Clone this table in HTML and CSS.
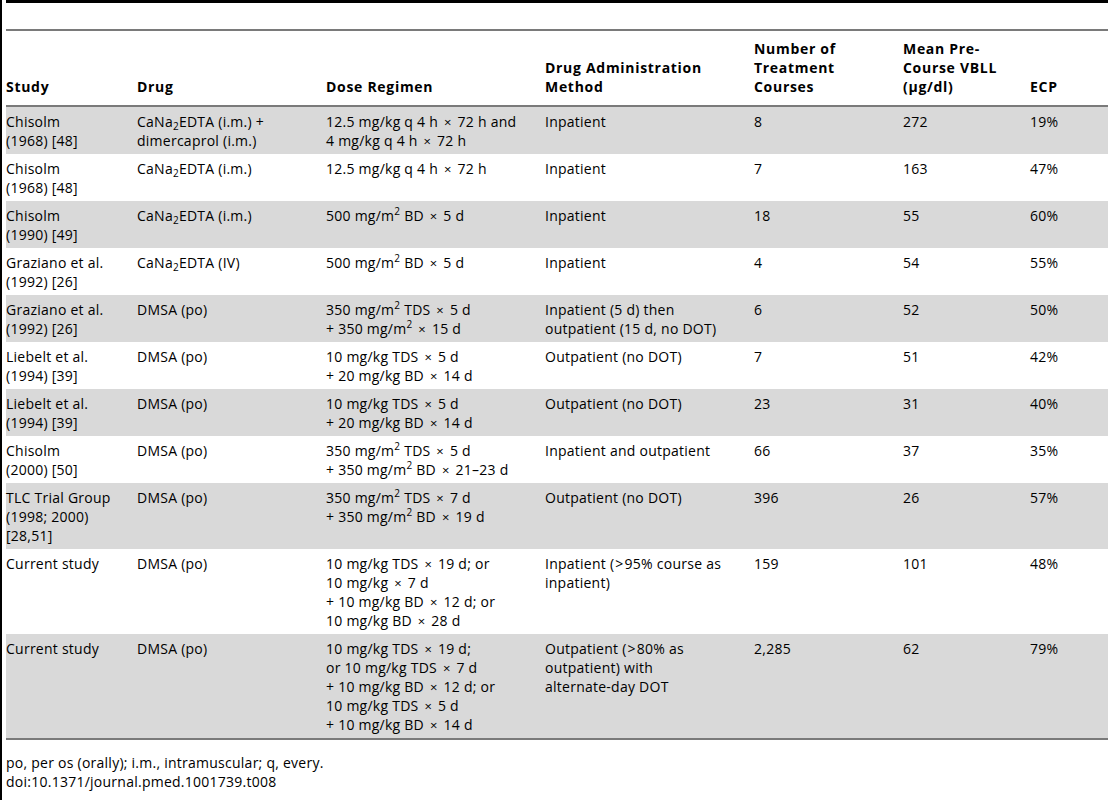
FILE: index.html
```html
<!DOCTYPE html>
<html lang="en">

<head>
    <meta charset="UTF-8">
    <meta name="viewport" content="width=device-width, initial-scale=1.0">
    <title>Table 8</title>
    <link rel="stylesheet" href="styles.css">
</head>

<body>

    <div class="page">
        <div class="caption"></div>

        <table class="data">
            <colgroup>
                <col class="c-study">
                <col class="c-drug">
                <col class="c-dose">
                <col class="c-method">
                <col class="c-courses">
                <col class="c-vbll">
                <col class="c-ecp">
            </colgroup>
            <thead>
                <tr>
                    <th>Study</th>
                    <th>Drug</th>
                    <th>Dose Regimen</th>
                    <th>Drug Administration<br>Method</th>
                    <th>Number of<br>Treatment<br>Courses</th>
                    <th>Mean Pre-<br>Course VBLL<br>(&mu;g/dl)</th>
                    <th>ECP</th>
                </tr>
            </thead>
            <tbody>
                <tr>
                    <td>Chisolm<br>(1968) [48]</td>
                    <td>CaNa<sub>2</sub>EDTA (i.m.) +<br>dimercaprol (i.m.)</td>
                    <td>12.5 mg/kg q 4 h <span class="x">&times;</span> 72 h and<br>4 mg/kg q 4 h <span class="x">&times;</span> 72 h</td>
                    <td>Inpatient</td>
                    <td>8</td>
                    <td>272</td>
                    <td>19%</td>
                </tr>
                <tr>
                    <td>Chisolm<br>(1968) [48]</td>
                    <td>CaNa<sub>2</sub>EDTA (i.m.)</td>
                    <td>12.5 mg/kg q 4 h <span class="x">&times;</span> 72 h</td>
                    <td>Inpatient</td>
                    <td>7</td>
                    <td>163</td>
                    <td>47%</td>
                </tr>
                <tr>
                    <td>Chisolm<br>(1990) [49]</td>
                    <td>CaNa<sub>2</sub>EDTA (i.m.)</td>
                    <td>500 mg/m<sup>2</sup> BD <span class="x">&times;</span> 5 d</td>
                    <td>Inpatient</td>
                    <td>18</td>
                    <td>55</td>
                    <td>60%</td>
                </tr>
                <tr>
                    <td>Graziano et al.<br>(1992) [26]</td>
                    <td>CaNa<sub>2</sub>EDTA (IV)</td>
                    <td>500 mg/m<sup>2</sup> BD <span class="x">&times;</span> 5 d</td>
                    <td>Inpatient</td>
                    <td>4</td>
                    <td>54</td>
                    <td>55%</td>
                </tr>
                <tr>
                    <td>Graziano et al.<br>(1992) [26]</td>
                    <td>DMSA (po)</td>
                    <td>350 mg/m<sup>2</sup> TDS <span class="x">&times;</span> 5 d<br>+ 350 mg/m<sup>2</sup> <span class="x">&times;</span> 15 d</td>
                    <td>Inpatient (5 d) then<br>outpatient (15 d, no DOT)</td>
                    <td>6</td>
                    <td>52</td>
                    <td>50%</td>
                </tr>
                <tr>
                    <td>Liebelt et al.<br>(1994) [39]</td>
                    <td>DMSA (po)</td>
                    <td>10 mg/kg TDS <span class="x">&times;</span> 5 d<br>+ 20 mg/kg BD <span class="x">&times;</span> 14 d</td>
                    <td>Outpatient (no DOT)</td>
                    <td>7</td>
                    <td>51</td>
                    <td>42%</td>
                </tr>
                <tr>
                    <td>Liebelt et al.<br>(1994) [39]</td>
                    <td>DMSA (po)</td>
                    <td>10 mg/kg TDS <span class="x">&times;</span> 5 d<br>+ 20 mg/kg BD <span class="x">&times;</span> 14 d</td>
                    <td>Outpatient (no DOT)</td>
                    <td>23</td>
                    <td>31</td>
                    <td>40%</td>
                </tr>
                <tr>
                    <td>Chisolm<br>(2000) [50]</td>
                    <td>DMSA (po)</td>
                    <td>350 mg/m<sup>2</sup> TDS <span class="x">&times;</span> 5 d<br>+ 350 mg/m<sup>2</sup> BD <span class="x">&times;</span> 21&ndash;23 d</td>
                    <td>Inpatient and outpatient</td>
                    <td>66</td>
                    <td>37</td>
                    <td>35%</td>
                </tr>
                <tr>
                    <td>TLC Trial Group<br>(1998; 2000)<br>[28,51]</td>
                    <td>DMSA (po)</td>
                    <td>350 mg/m<sup>2</sup> TDS <span class="x">&times;</span> 7 d<br>+ 350 mg/m<sup>2</sup> BD <span class="x">&times;</span> 19 d</td>
                    <td>Outpatient (no DOT)</td>
                    <td>396</td>
                    <td>26</td>
                    <td>57%</td>
                </tr>
                <tr>
                    <td>Current study</td>
                    <td>DMSA (po)</td>
                    <td>10 mg/kg TDS <span class="x">&times;</span> 19 d; or<br>10 mg/kg <span class="x">&times;</span> 7 d<br>+ 10 mg/kg BD <span class="x">&times;</span> 12 d; or<br>10 mg/kg BD <span class="x">&times;</span> 28 d</td>
                    <td>Inpatient (<span class="gt">&gt;</span>95% course as<br>inpatient)</td>
                    <td>159</td>
                    <td>101</td>
                    <td>48%</td>
                </tr>
                <tr>
                    <td>Current study</td>
                    <td>DMSA (po)</td>
                    <td>10 mg/kg TDS <span class="x">&times;</span> 19 d;<br>or 10 mg/kg TDS <span class="x">&times;</span> 7 d<br>+ 10 mg/kg BD <span class="x">&times;</span> 12 d; or<br>10 mg/kg TDS <span class="x">&times;</span> 5 d<br>+ 10 mg/kg BD <span class="x">&times;</span> 14 d</td>
                    <td>Outpatient (<span class="gt">&gt;</span>80% as<br>outpatient) with<br>alternate-day DOT</td>
                    <td>2,285</td>
                    <td>62</td>
                    <td>79%</td>
                </tr>
            </tbody>
        </table>

        <div class="notes">
            <p>po, per os (orally); i.m., intramuscular; q, every.</p>
            <p>doi:10.1371/journal.pmed.1001739.t008</p>
        </div>
    </div>

</body>

</html>
```

FILE: styles.css
```css
body {
    margin: 0;
    background: #ffffff;
    color: #000000;
    font-family: "Open Sans", "DejaVu Sans", sans-serif;
    font-size: 14px;
    line-height: 19px;
    letter-spacing: 0.25px;
}

.page {
    min-height: 100vh;
    box-sizing: border-box;
    border-left: 2px solid #000000;
    padding-left: 4px;
}

.caption {
    height: 26px;
    border-top: 3px solid #000000;
}

.data {
    width: 1102px;
    table-layout: fixed;
    border-collapse: collapse;
    border-top: 2px solid #7a7a7a;
    border-bottom: 2px solid #7a7a7a;
}

.c-study { width: 131px; }
.c-drug { width: 189px; }
.c-dose { width: 219px; }
.c-method { width: 209px; }
.c-courses { width: 149px; }
.c-vbll { width: 127px; }
.c-ecp { width: 78px; }

.data th {
    height: 57px;
    padding: 8px 4px 9px 0;
    text-align: left;
    vertical-align: bottom;
    font-weight: bold;
    letter-spacing: 0.7px;
    border-bottom: 2px solid #7a7a7a;
    white-space: nowrap;
}

.data td {
    padding: 5px 4px 4px 0;
    text-align: left;
    vertical-align: top;
    white-space: nowrap;
}

.data tbody tr:nth-child(odd) {
    background: #d9d9d9;
}

.data sub,
.data sup {
    position: relative;
    vertical-align: baseline;
    font-size: 10px;
    line-height: 0;
}

.data sup {
    top: -6px;
}

.data sub {
    top: 3px;
}

.x {
    font-size: 13px;
    line-height: 0;
    padding: 0 2px;
}

.gt {
    line-height: 0;
    padding: 0 1px;
}

.notes {
    margin-top: 13px;
}

.notes p {
    margin: 0;
}
```
